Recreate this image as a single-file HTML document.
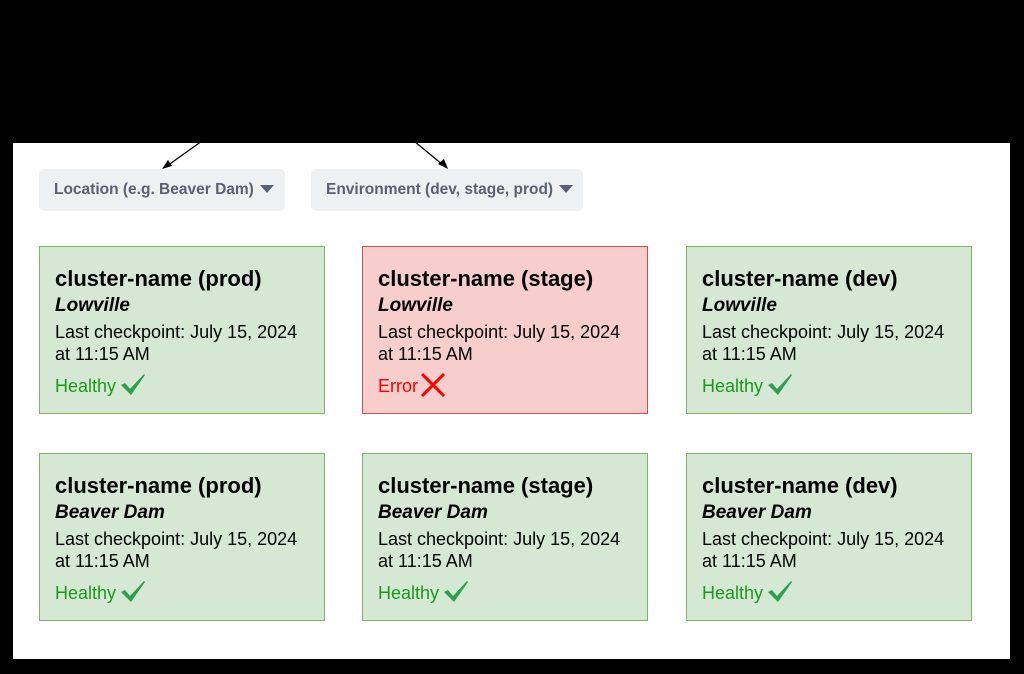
<!DOCTYPE html>
<html><head><style>
body{margin:0;width:1024px;height:674px;background:#000;position:relative;overflow:hidden;font-family:"Liberation Sans",Arial,sans-serif}
.w{position:absolute;left:13px;top:143px;width:997px;height:516px;background:#fff}
.dd{position:absolute;top:169px;height:42px;background:#eff0f2;border-radius:5px;color:#5a6172;font-weight:bold;font-size:15.5px;line-height:42px;box-sizing:border-box;padding-left:15px}
.dd span{display:inline-block;width:0;height:0;border-left:7px solid transparent;border-right:7px solid transparent;border-top:8px solid #5a6172;margin-left:6px;vertical-align:1px}
.c{position:absolute;width:286px;height:168px;box-sizing:border-box;background:#d5e8d4;border:1px solid #82b366;padding:19px 0 0 15px}
.c.e{background:#f8cecc;border-color:#d14f4f}
.t{font-weight:bold;font-size:22px;line-height:25px}
.l{font-weight:bold;font-style:italic;font-size:19px;line-height:26px;margin-top:2px}
.d{font-size:18px;line-height:22px;margin-top:2px}
.s{font-size:18px;color:#1a9a1a;margin-top:7px;height:28px;line-height:28px}
.s svg{vertical-align:-4px;margin-left:5px}
.e .s{color:#f00}
</style></head><body>
<div class="w"></div>
<svg style="position:absolute;left:0;top:0" width="1024" height="674">
<line x1="202" y1="141" x2="167" y2="166" stroke="#000" stroke-width="1.3"/>
<polygon points="162,169 168,160 172,166" fill="#000"/>
<line x1="414" y1="141" x2="443" y2="165" stroke="#000" stroke-width="1.3"/>
<polygon points="448,169 438,164 444,159" fill="#000"/>
</svg>
<div class="dd" style="left:39px;width:246px">Location (e.g. Beaver Dam)<span></span></div>
<div class="dd" style="left:311px;width:272px">Environment (dev, stage, prod)<span></span></div>

<div class="c" style="left:39px;top:246px"><div class="t">cluster-name (prod)</div><div class="l">Lowville</div><div class="d">Last checkpoint: July 15, 2024<br>at 11:15 AM</div><div class="s">Healthy<svg width="24" height="22" viewBox="0 0 24 22"><path d="M0 11 L4 9 L9 15 L23 0 L24 1 L10 21 Z" fill="#2e9e4f"/></svg></div></div>
<div class="c e" style="left:362px;top:246px"><div class="t">cluster-name (stage)</div><div class="l">Lowville</div><div class="d">Last checkpoint: July 15, 2024<br>at 11:15 AM</div><div class="s">Error<svg width="26" height="26" viewBox="0 0 26 26" style="margin-left:2px;vertical-align:-6px"><path d="M2 2 L24 24 M24 2 L2 24" stroke="#f00" stroke-width="3"/></svg></div></div>
<div class="c" style="left:686px;top:246px"><div class="t">cluster-name (dev)</div><div class="l">Lowville</div><div class="d">Last checkpoint: July 15, 2024<br>at 11:15 AM</div><div class="s">Healthy<svg width="24" height="22" viewBox="0 0 24 22"><path d="M0 11 L4 9 L9 15 L23 0 L24 1 L10 21 Z" fill="#2e9e4f"/></svg></div></div>

<div class="c" style="left:39px;top:453px"><div class="t">cluster-name (prod)</div><div class="l">Beaver Dam</div><div class="d">Last checkpoint: July 15, 2024<br>at 11:15 AM</div><div class="s">Healthy<svg width="24" height="22" viewBox="0 0 24 22"><path d="M0 11 L4 9 L9 15 L23 0 L24 1 L10 21 Z" fill="#2e9e4f"/></svg></div></div>
<div class="c" style="left:362px;top:453px"><div class="t">cluster-name (stage)</div><div class="l">Beaver Dam</div><div class="d">Last checkpoint: July 15, 2024<br>at 11:15 AM</div><div class="s">Healthy<svg width="24" height="22" viewBox="0 0 24 22"><path d="M0 11 L4 9 L9 15 L23 0 L24 1 L10 21 Z" fill="#2e9e4f"/></svg></div></div>
<div class="c" style="left:686px;top:453px"><div class="t">cluster-name (dev)</div><div class="l">Beaver Dam</div><div class="d">Last checkpoint: July 15, 2024<br>at 11:15 AM</div><div class="s">Healthy<svg width="24" height="22" viewBox="0 0 24 22"><path d="M0 11 L4 9 L9 15 L23 0 L24 1 L10 21 Z" fill="#2e9e4f"/></svg></div></div>
</body></html>
